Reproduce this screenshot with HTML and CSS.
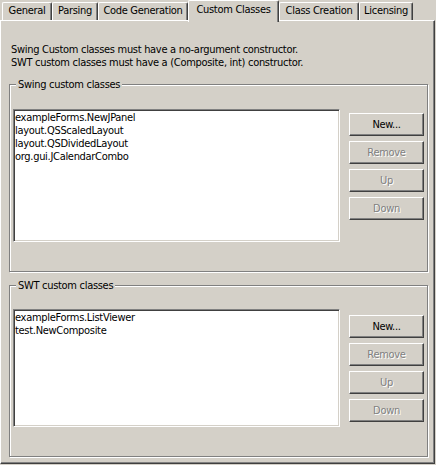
FILE: index.html
```html
<!DOCTYPE html>
<html>
<head>
<meta charset="utf-8">
<link rel="stylesheet" href="styles.css">
</head>
<body>
<div class="window">
  <div class="tabs">
    <div class="tab t-general">General</div>
    <div class="tab t-parsing">Parsing</div>
    <div class="tab t-codegen">Code Generation</div>
    <div class="tab tab-selected t-custom">Custom Classes</div>
    <div class="tab t-creation">Class Creation</div>
    <div class="tab t-licensing">Licensing</div>
  </div>
  <div class="panel">
    <p class="intro">Swing Custom classes must have a no-argument constructor.<br>SWT custom classes must have a (Composite, int) constructor.</p>
    <fieldset class="group group-swing">
      <legend>Swing custom classes</legend>
      <div class="group-body">
        <ul class="list list-swing">
          <li>exampleForms.NewJPanel</li>
          <li>layout.QSScaledLayout</li>
          <li>layout.QSDividedLayout</li>
          <li>org.gui.JCalendarCombo</li>
        </ul>
        <div class="buttons">
          <button class="btn">New...</button>
          <button class="btn" disabled>Remove</button>
          <button class="btn" disabled>Up</button>
          <button class="btn" disabled>Down</button>
        </div>
      </div>
    </fieldset>
    <fieldset class="group group-swt">
      <legend>SWT custom classes</legend>
      <div class="group-body">
        <ul class="list list-swt">
          <li>exampleForms.ListViewer</li>
          <li>test.NewComposite</li>
        </ul>
        <div class="buttons">
          <button class="btn">New...</button>
          <button class="btn" disabled>Remove</button>
          <button class="btn" disabled>Up</button>
          <button class="btn" disabled>Down</button>
        </div>
      </div>
    </fieldset>
  </div>
</div>
</body>
</html>
```
FILE: styles.css
```css
* { box-sizing: border-box; }
body {
  margin: 0;
  background: #d4d0c8;
  font-family: "DejaVu Sans Condensed", "DejaVu Sans", sans-serif;
  font-stretch: condensed;
  font-size: 11px;
  line-height: 13px;
  letter-spacing: -0.3px;
  color: #000;
}
.window { width: 435px; height: 465px; }
.tabs {
  display: flex;
  align-items: flex-end;
  height: 20px;
  padding-left: 2px;
}
.tab {
  height: 18px;
  border-top: 1px solid #fff;
  border-left: 1px solid #fff;
  border-right: 1px solid #404040;
  border-radius: 2px 2px 0 0;
  box-shadow: inset -1px 0 #808080;
  text-align: center;
  line-height: 16px;
  white-space: nowrap;
  background: #d4d0c8;
}
.t-general { width: 50px; }
.t-parsing { width: 46px; }
.t-codegen { width: 90px; }
.t-custom { width: 91px; }
.t-creation { width: 80px; }
.t-licensing { width: 54px; }
.tab-selected {
  position: relative;
  z-index: 1;
  height: 22px;
  margin-bottom: -2px;
  padding-top: 1px;
  line-height: 16px;
}
.panel {
  height: 444px;
  border-top: 1px solid #fff;
  border-left: 1px solid #fff;
  border-right: 1px solid #404040;
  border-bottom: 1px solid #404040;
  box-shadow: inset -1px -1px #808080;
  padding: 22px 0 0 8px;
}
.intro { margin: 0 0 9px 2px; }
.group {
  margin: 0;
  width: 419px;
  min-width: 0;
  border: 1px solid #808080;
  box-shadow: 1px 1px #fff, inset 1px 1px #fff;
  padding: 18px 3px 29px 3px;
}
.group-swt { margin-top: 7px; padding-top: 17px; padding-bottom: 29px; }
.group legend {
  padding: 0 2px;
  margin-left: 3px;
  background: #d4d0c8;
  line-height: 13px;
}
.group-body { display: flex; align-items: flex-start; }
.list {
  list-style: none;
  margin: 0;
  padding: 0;
  width: 327px;
  background: #fff;
  border: 1px solid;
  border-color: #808080 #fff #fff #808080;
  box-shadow: inset 1px 1px #404040, inset -1px -1px #d4d0c8;
  padding: 1px 0 0 1px;
}
.list-swing { height: 133px; }
.list-swt { height: 118px; }
.buttons {
  display: flex;
  flex-direction: column;
  gap: 5px;
  margin: 4px 0 0 9px;
}
.group-swt .buttons { margin-top: 6px; }
.btn {
  width: 75px;
  height: 23px;
  padding: 0;
  font: inherit;
  font-stretch: condensed;
  letter-spacing: -0.3px;
  color: #000;
  background: #d4d0c8;
  border: 1px solid;
  border-color: #fff #404040 #404040 #fff;
  box-shadow: inset -1px -1px #808080;
  border-radius: 0;
}
.btn:disabled {
  color: #808080;
  text-shadow: 1px 1px #fff;
}
```
